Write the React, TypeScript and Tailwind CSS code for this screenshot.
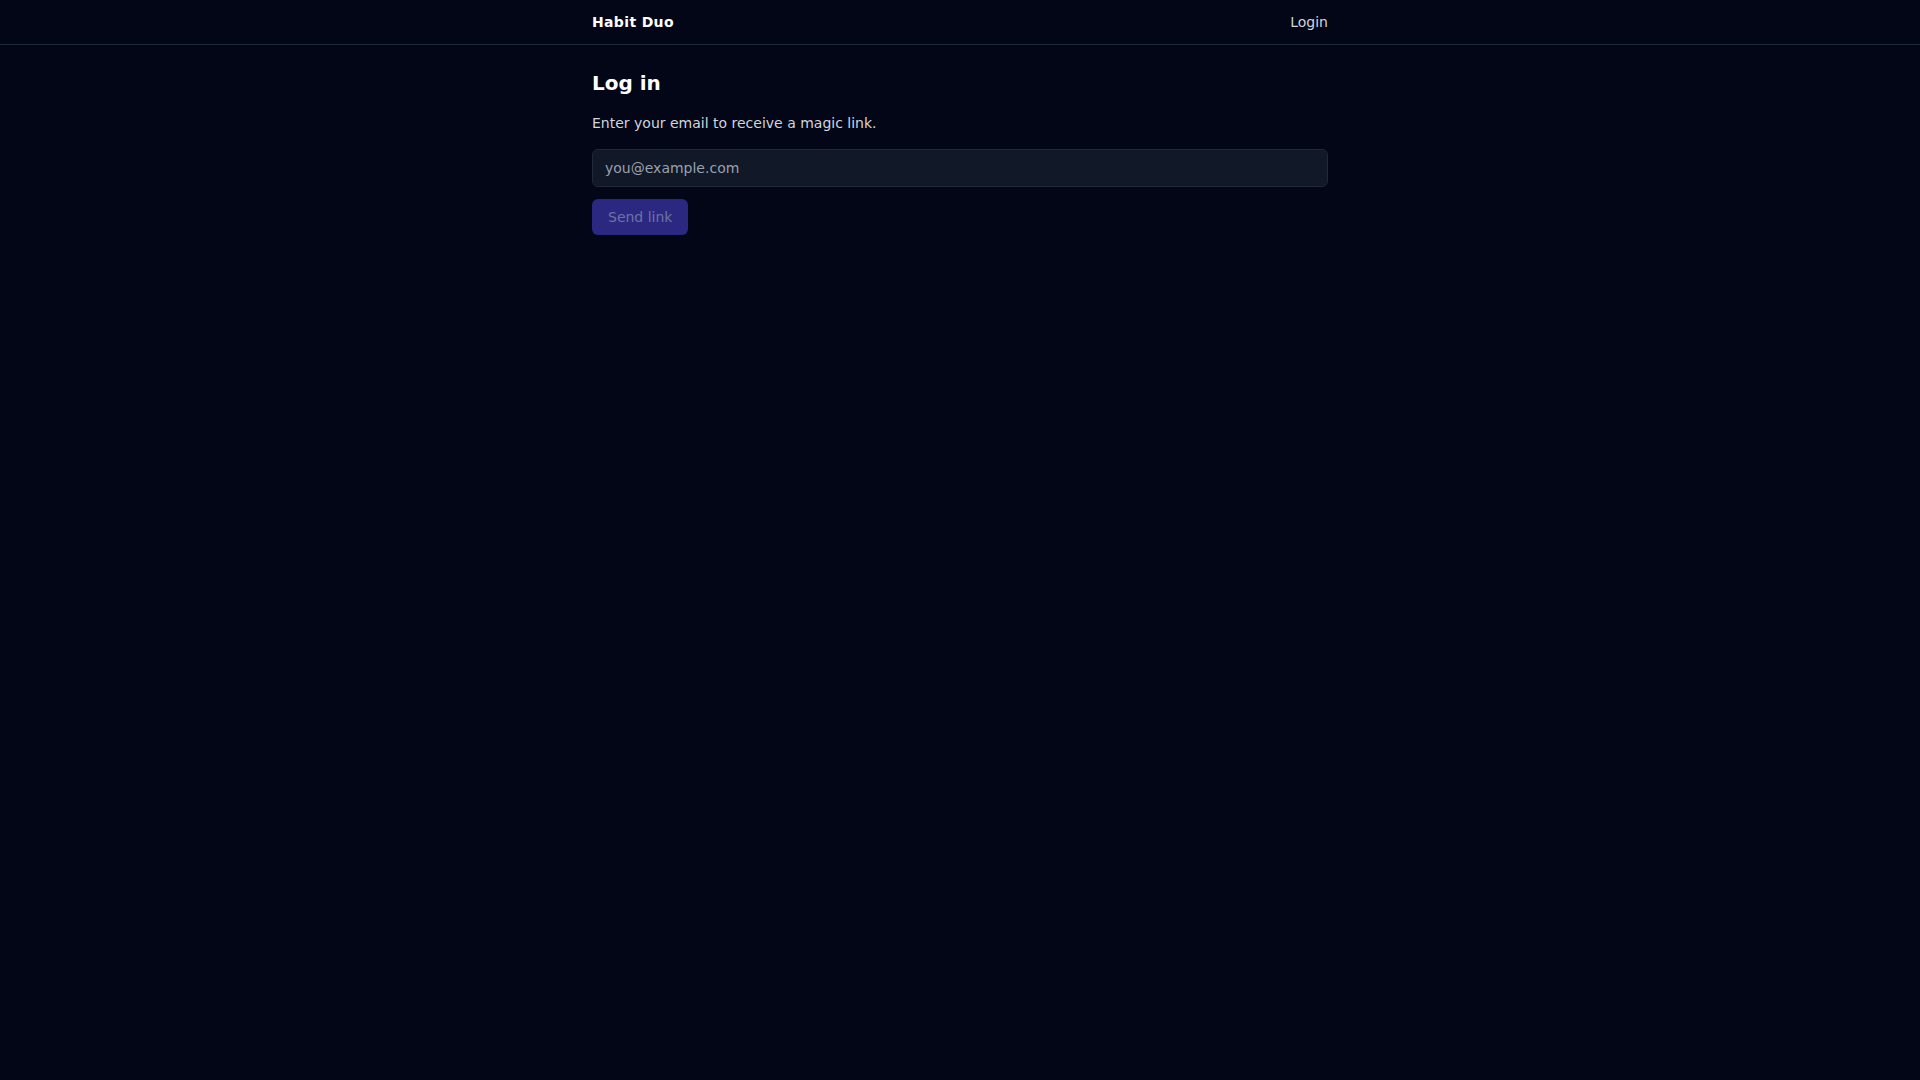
export default function App() {
  return (
    <div
      className="min-h-screen bg-[#020617] text-gray-100"
      style={{ fontFamily: '"DejaVu Sans", sans-serif' }}
    >
      <header className="border-b border-[#1e293b]">
        <div className="mx-auto flex max-w-3xl items-center justify-between px-4 py-3">
          <span className="text-sm font-semibold tracking-wide text-white">Habit Duo</span>
          <a href="#" className="text-sm text-gray-300">
            Login
          </a>
        </div>
      </header>

      <main className="mx-auto max-w-3xl px-4 py-6">
        <h1 className="text-xl font-bold text-white">Log in</h1>
        <p className="mt-4 text-sm text-gray-300">Enter your email to receive a magic link.</p>
        <form className="mt-4 space-y-3" onSubmit={(e) => e.preventDefault()}>
          <input
            type="email"
            placeholder="you@example.com"
            className="block w-full rounded-md border border-[#1f2937] bg-[#111827] px-3 py-2 text-sm text-gray-100 placeholder:text-gray-400 outline-none"
          />
          <button
            type="submit"
            disabled
            className="rounded-md bg-[#2b2882] px-4 py-2 text-sm text-[#6f72a3]"
          >
            Send link
          </button>
        </form>
      </main>
    </div>
  );
}
